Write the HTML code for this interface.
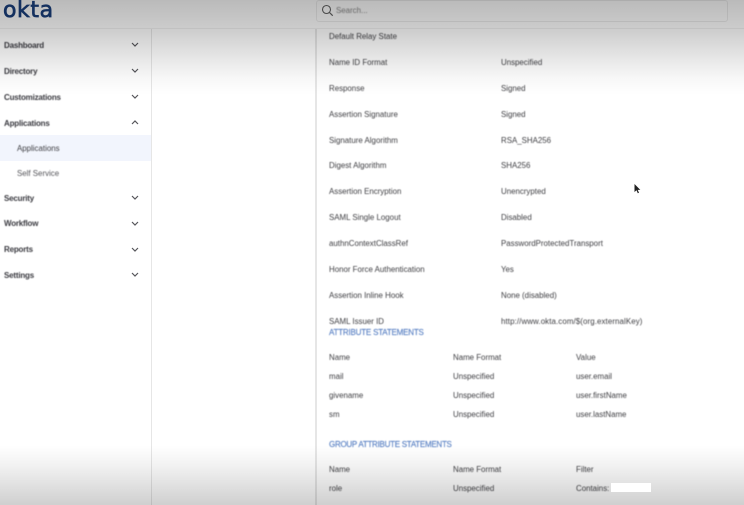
<!DOCTYPE html>
<html><head><meta charset="utf-8"><style>
html,body{margin:0;padding:0}
body{width:744px;height:505px;overflow:hidden;background:#fff;position:relative;font-family:"Liberation Sans",sans-serif}
.t{position:absolute;white-space:nowrap;font-size:7.9px;line-height:12px;margin-top:1px;color:#3e3e42;filter:blur(.4px)}
.n{font-weight:700;color:#3a3a40;font-size:8px;letter-spacing:-.2px;left:4px}
.b{color:#5b82c4;font-size:8px;letter-spacing:-.2px;-webkit-text-stroke:.15px #5b82c4}
.v{position:absolute;width:1px;background:#e6e6e6;top:29px;height:476px}
svg.c{position:absolute;left:131px;width:8px;height:5px;filter:blur(.3px)}
</style></head><body>
<div style="position:absolute;left:0;top:135px;width:151px;height:26px;background:#f2f5fd"></div>
<div class="v" style="left:151px"></div>
<div class="v" style="left:315px;width:2px"></div>

<div class="t n" style="top:39px">Dashboard</div>
<div class="t n" style="top:65px">Directory</div>
<div class="t n" style="top:91px">Customizations</div>
<div class="t n" style="top:117px">Applications</div>
<div class="t" style="left:17px;top:142px">Applications</div>
<div class="t" style="left:17px;top:167px;color:#55555a">Self Service</div>
<div class="t n" style="top:192px">Security</div>
<div class="t n" style="top:217px">Workflow</div>
<div class="t n" style="top:243px">Reports</div>
<div class="t n" style="top:269px">Settings</div>

<svg class="c" style="top:42px" viewBox="0 0 8 5"><path d="M1 1l3 3 3-3" fill="none" stroke="#55555a" stroke-width="1.2"/></svg>
<svg class="c" style="top:68px" viewBox="0 0 8 5"><path d="M1 1l3 3 3-3" fill="none" stroke="#55555a" stroke-width="1.2"/></svg>
<svg class="c" style="top:94px" viewBox="0 0 8 5"><path d="M1 1l3 3 3-3" fill="none" stroke="#55555a" stroke-width="1.2"/></svg>
<svg class="c" style="top:120px" viewBox="0 0 8 5"><path d="M1 4l3-3 3 3" fill="none" stroke="#55555a" stroke-width="1.2"/></svg>
<svg class="c" style="top:195px" viewBox="0 0 8 5"><path d="M1 1l3 3 3-3" fill="none" stroke="#55555a" stroke-width="1.2"/></svg>
<svg class="c" style="top:221px" viewBox="0 0 8 5"><path d="M1 1l3 3 3-3" fill="none" stroke="#55555a" stroke-width="1.2"/></svg>
<svg class="c" style="top:247px" viewBox="0 0 8 5"><path d="M1 1l3 3 3-3" fill="none" stroke="#55555a" stroke-width="1.2"/></svg>
<svg class="c" style="top:272px" viewBox="0 0 8 5"><path d="M1 1l3 3 3-3" fill="none" stroke="#55555a" stroke-width="1.2"/></svg>

<div class="t" style="left:329px;top:30px">Default Relay State</div>
<div class="t" style="left:329px;top:56px">Name ID Format</div><div class="t" style="left:501px;top:56px">Unspecified</div>
<div class="t" style="left:329px;top:82px">Response</div><div class="t" style="left:501px;top:82px">Signed</div>
<div class="t" style="left:329px;top:108px">Assertion Signature</div><div class="t" style="left:501px;top:108px">Signed</div>
<div class="t" style="left:329px;top:134px">Signature Algorithm</div><div class="t" style="left:501px;top:134px">RSA_SHA256</div>
<div class="t" style="left:329px;top:159px">Digest Algorithm</div><div class="t" style="left:501px;top:159px">SHA256</div>
<div class="t" style="left:329px;top:185px">Assertion Encryption</div><div class="t" style="left:501px;top:185px">Unencrypted</div>
<div class="t" style="left:329px;top:211px">SAML Single Logout</div><div class="t" style="left:501px;top:211px">Disabled</div>
<div class="t" style="left:329px;top:237px">authnContextClassRef</div><div class="t" style="left:501px;top:237px">PasswordProtectedTransport</div>
<div class="t" style="left:329px;top:263px">Honor Force Authentication</div><div class="t" style="left:501px;top:263px">Yes</div>
<div class="t" style="left:329px;top:289px">Assertion Inline Hook</div><div class="t" style="left:501px;top:289px">None (disabled)</div>
<div class="t" style="left:329px;top:315px">SAML Issuer ID</div><div class="t" style="left:501px;top:315px;letter-spacing:.1px">http://www.okta.com/$(org.externalKey)</div>

<div class="t b" style="left:329px;top:326px">ATTRIBUTE STATEMENTS</div>
<div class="t" style="left:329px;top:351px">Name</div><div class="t" style="left:453px;top:351px">Name Format</div><div class="t" style="left:576px;top:351px">Value</div>
<div class="t" style="left:329px;top:370px">mail</div><div class="t" style="left:453px;top:370px">Unspecified</div><div class="t" style="left:576px;top:370px">user.email</div>
<div class="t" style="left:329px;top:389px">givename</div><div class="t" style="left:453px;top:389px">Unspecified</div><div class="t" style="left:576px;top:389px">user.firstName</div>
<div class="t" style="left:329px;top:408px">sm</div><div class="t" style="left:453px;top:408px">Unspecified</div><div class="t" style="left:576px;top:408px">user.lastName</div>

<div class="t b" style="left:329px;top:438px;letter-spacing:-.27px">GROUP ATTRIBUTE STATEMENTS</div>
<div class="t" style="left:329px;top:463px">Name</div><div class="t" style="left:453px;top:463px">Name Format</div><div class="t" style="left:576px;top:463px">Filter</div>
<div class="t" style="left:329px;top:482px">role</div><div class="t" style="left:453px;top:482px">Unspecified</div><div class="t" style="left:576px;top:482px">Contains:</div>

<svg style="position:absolute;left:633px;top:183px;filter:blur(.3px)" width="8" height="12" viewBox="0 0 8 12"><path d="M1.5 1v8l2-1.7 1.3 3 1.2-.5-1.3-2.9h2.6z" fill="#222"/></svg>

<div style="position:absolute;left:0;top:0;width:744px;height:120px;background:linear-gradient(to bottom,rgba(0,0,0,.27) 0,rgba(0,0,0,.2) 29px,rgba(0,0,0,.16) 40px,rgba(0,0,0,.09) 60px,rgba(0,0,0,.03) 78px,rgba(0,0,0,0) 95px)"></div>
<div style="position:absolute;left:0;top:445px;width:744px;height:60px;background:linear-gradient(to bottom,rgba(0,0,0,0),rgba(0,0,0,.05) 20px,rgba(0,0,0,.19))"></div>

<div style="position:absolute;left:0;top:28px;width:744px;height:1px;background:rgba(0,0,0,.05)"></div>
<div style="position:absolute;left:316px;top:0;width:410px;height:20px;border:1px solid rgba(0,0,0,.07);border-radius:3px;box-sizing:content-box"></div>
<svg style="position:absolute;left:321px;top:4px;filter:blur(.3px)" width="13" height="13" viewBox="0 0 13 13"><circle cx="5.5" cy="5.5" r="4" fill="none" stroke="#4a4a4a" stroke-width="1.1"/><path d="M8.5 8.5l3.2 3.2" stroke="#4a4a4a" stroke-width="1.2"/></svg>
<div class="t" style="left:336px;top:4px;color:#666">Search...</div>
<div style="position:absolute;left:3px;top:-4px;font-family:'DejaVu Sans',sans-serif;font-size:22px;line-height:30px;color:#14305f;letter-spacing:.6px;-webkit-text-stroke:.7px #14305f;filter:blur(.35px)">okta</div>

<div style="position:absolute;left:611px;top:483px;width:40px;height:9px;background:#fff"></div>
</body></html>
